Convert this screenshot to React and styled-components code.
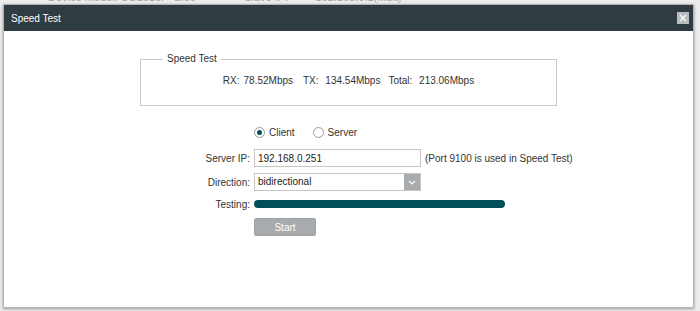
import styled, { createGlobalStyle } from 'styled-components';

const GlobalStyle = createGlobalStyle`
  html, body {
    margin: 0;
    padding: 0;
    background: #ececec;
    font-family: "Liberation Sans", Arial, Helvetica, sans-serif;
    font-size: 10px;
    color: #333;
    overflow: hidden;
  }
`;

const Page = styled.div`
  position: relative;
  width: 700px;
  height: 311px;
  overflow: hidden;
`;

const PageRow = styled.div`
  display: flex;
  margin-top: -9px;
  color: #a4a4a4;
  font-size: 11px;
  line-height: 12px;
  span {
    margin-left: ${props => props.$indent || 48}px;
  }
`;

const Modal = styled.div`
  position: absolute;
  top: 4px;
  left: 3px;
  width: 689px;
  height: 302px;
  background: #fff;
  border: 1px solid #b4b4b4;
  box-shadow: 0 1px 3px rgba(0, 0, 0, 0.35);
  display: flex;
  flex-direction: column;
`;

const Header = styled.div`
  height: 26px;
  background: #2f3c41;
  display: flex;
  align-items: center;
  justify-content: space-between;
  padding: 0 4px 0 7px;
  flex-shrink: 0;
`;

const Title = styled.span`
  color: #fff;
  font-size: 10px;
`;

const Close = styled.button`
  width: 12px;
  height: 12px;
  padding: 0;
  border: none;
  background: #b9bdbe;
  display: flex;
  align-items: center;
  justify-content: center;
  cursor: pointer;
`;

const Body = styled.div`
  flex: 1;
`;

const Fieldset = styled.fieldset`
  width: 415px;
  margin: 22px auto 0;
  padding: 10px 0 18px;
  border: 1px solid #c9c9c9;
  text-align: center;
  line-height: 12px;
  legend {
    margin-left: 22px;
    padding: 0 4px;
    line-height: 12px;
    text-align: left;
  }
`;

const Stat = styled.span`
  margin-right: ${props => props.$gap || 0}px;
  b {
    font-weight: normal;
    margin-right: 4px;
  }
`;

const Row = styled.div`
  display: flex;
  align-items: center;
  height: ${props => props.$h}px;
  margin-top: ${props => props.$mt}px;
`;

const Label = styled.div`
  width: 250px;
  padding-right: 4px;
  text-align: right;
  box-sizing: border-box;
  flex-shrink: 0;
`;

const Spacer = styled.div`
  width: 250px;
  flex-shrink: 0;
`;

const RadioOption = styled.label`
  display: flex;
  align-items: center;
  margin-right: 18px;
  cursor: pointer;
`;

const RadioDot = styled.span`
  width: 9px;
  height: 9px;
  border-radius: 50%;
  border: 1px solid #9a9a9a;
  background: #fff;
  margin-right: 4px;
  display: flex;
  align-items: center;
  justify-content: center;
  &::after {
    content: '';
    width: 5px;
    height: 5px;
    border-radius: 50%;
    background: ${props => (props.$checked ? '#00505b' : 'transparent')};
  }
`;

const TextInput = styled.input`
  width: 167px;
  height: 18px;
  box-sizing: border-box;
  border: 1px solid #c6c6c6;
  padding: 0 3px;
  font-family: inherit;
  font-size: 10px;
  color: #222;
  outline: none;
`;

const Note = styled.span`
  margin-left: 4px;
`;

const Select = styled.div`
  width: 167px;
  height: 18px;
  box-sizing: border-box;
  border: 1px solid #c6c6c6;
  display: flex;
  align-items: stretch;
  span {
    flex: 1;
    padding-left: 3px;
    line-height: 16px;
    color: #222;
  }
`;

const Arrow = styled.div`
  width: 16px;
  background: #a9acae;
  display: flex;
  align-items: center;
  justify-content: center;
`;

const Progress = styled.div`
  width: 251px;
  height: 8px;
  border-radius: 4px;
  background: #004f5a;
`;

const Button = styled.button`
  width: 62px;
  height: 18px;
  border: 1px solid #9fa2a4;
  border-radius: 2px;
  background: #a8abad;
  color: #fff;
  font-family: inherit;
  font-size: 10px;
  padding: 0;
`;

const App = () => (
  <>
    <GlobalStyle />
    <Page>
      <PageRow>
        <span>Device Model: SG2016P&nbsp;&nbsp;2.00</span>
        <span $indent={200}>Slave IP:&nbsp;&nbsp;&nbsp;&nbsp;&nbsp;&nbsp;&nbsp;&nbsp;&nbsp;192.168.0.1(Mbit)</span>
      </PageRow>
      <Modal>
        <Header>
          <Title>Speed Test</Title>
          <Close aria-label="close">
            <svg width="8" height="8" viewBox="0 0 8 8">
              <path d="M1 1L7 7M7 1L1 7" stroke="#fff" strokeWidth="1.2" />
            </svg>
          </Close>
        </Header>
        <Body>
          <Fieldset>
            <legend>Speed Test</legend>
            <Stat $gap={10}><b>RX:</b>78.52Mbps</Stat>
            <Stat $gap={8}><b>TX:</b> 134.54Mbps</Stat>
            <Stat><b>Total:</b> 213.06Mbps</Stat>
          </Fieldset>
          <Row $h={14} $mt={19}>
            <Spacer />
            <RadioOption>
              <RadioDot $checked />
              Client
            </RadioOption>
            <RadioOption>
              <RadioDot />
              Server
            </RadioOption>
          </Row>
          <Row $h={18} $mt={10}>
            <Label>Server IP:</Label>
            <TextInput defaultValue="192.168.0.251" />
            <Note>(Port 9100 is used in Speed Test)</Note>
          </Row>
          <Row $h={18} $mt={6}>
            <Label>Direction:</Label>
            <Select>
              <span>bidirectional</span>
              <Arrow>
                <svg width="8" height="5" viewBox="0 0 8 5">
                  <path d="M1 1L4 4L7 1" stroke="#fff" strokeWidth="1.1" fill="none" />
                </svg>
              </Arrow>
            </Select>
          </Row>
          <Row $h={16} $mt={5}>
            <Label>Testing:</Label>
            <Progress />
          </Row>
          <Row $h={18} $mt={6}>
            <Spacer />
            <Button>Start</Button>
          </Row>
        </Body>
      </Modal>
    </Page>
  </>
);

export default App;
